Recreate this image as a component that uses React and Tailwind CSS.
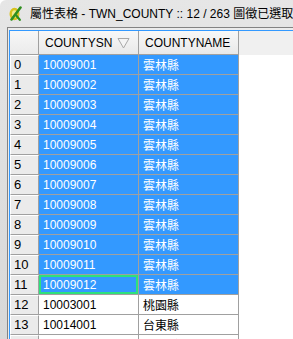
import React from 'react';

const filas = [
  ['10009001', '雲林縣'],
  ['10009002', '雲林縣'],
  ['10009003', '雲林縣'],
  ['10009004', '雲林縣'],
  ['10009005', '雲林縣'],
  ['10009006', '雲林縣'],
  ['10009007', '雲林縣'],
  ['10009008', '雲林縣'],
  ['10009009', '雲林縣'],
  ['10009010', '雲林縣'],
  ['10009011', '雲林縣'],
  ['10009012', '雲林縣'],
  ['10003001', '桃園縣'],
  ['10014001', '台東縣'],
  ['10013001', '屏東縣'],
];

function QgisIcon() {
  return (
    <svg width="13" height="15" viewBox="0 0 13 15" className="shrink-0">
      <ellipse cx="5.5" cy="8" rx="3.8" ry="5" fill="#f3ea8a" stroke="#d9c21e" strokeWidth="2.4" />
      <path d="M2.5 13.5 L11.5 1.5" stroke="#2f8f1f" strokeWidth="2.6" strokeLinecap="round" />
      <path d="M7.2 9.5 L10.8 13.8" stroke="#2f8f1f" strokeWidth="2.2" strokeLinecap="round" />
    </svg>
  );
}

function SortArrow() {
  return (
    <svg width="13" height="12" viewBox="0 0 13 12">
      <path d="M1 1.5 H12 L6.5 11 Z" fill="#f4f4f4" stroke="#a8a8a8" strokeWidth="1" strokeLinejoin="round" />
    </svg>
  );
}

export default function App() {
  return (
    <div className="w-[293px] h-[339px] overflow-hidden rounded-tl-[6px] bg-gradient-to-b from-[#e6e6e6] to-[#d8d8d8] font-['Liberation_Sans','Noto_Sans_CJK_TC',sans-serif] text-black">
      {/* barra de titulo */}
      <div className="h-[27px] flex items-center pl-[9px] gap-[8px] whitespace-nowrap text-[12px]">
        <QgisIcon />
        <span>
          <span className="font-['Noto_Sans_CJK_TC',sans-serif]">屬性表格</span>
          {' - TWN_COUNTY :: 12 / 263 '}
          <span className="font-['Noto_Sans_CJK_TC',sans-serif]">圖徵已選取</span>
        </span>
      </div>

      <div className="ml-[7px] h-[312px] border-t border-l border-[#838383] bg-[#ececec] pl-[1px] pt-[2px]">
        <div className="h-full border-t border-l border-[#3399ff] bg-white text-[12px]">
          {/* encabezado */}
          <div className="flex h-[24px] bg-[#f0f0f0]">
            <div className="w-[29px] border-r border-b border-[#a0a0a0] bg-gradient-to-b from-[#f7f7f7] to-[#ebebeb]" />
            <div className="w-[100px] flex items-center justify-between pl-[6px] pr-[8px] border-r border-b border-[#a0a0a0] bg-gradient-to-b from-[#f8f8f8] to-[#e9e9e9]">
              <span>COUNTYSN</span>
              <SortArrow />
            </div>
            <div className="w-[100px] flex items-center pl-[6px] border-r border-b border-[#a0a0a0] bg-gradient-to-b from-[#f8f8f8] to-[#e9e9e9]">
              <span>COUNTYNAME</span>
            </div>
          </div>

          {filas.map(([sn, nombre], i) => {
            const sel = i < 12;
            const actual = i === 11;
            return (
              <div key={i} className="flex h-[20px]">
                <div className="w-[29px] flex items-center pl-[3px] text-[13px] border-t border-l border-white border-r border-b border-r-[#a0a0a0] border-b-[#a0a0a0] bg-[#ebebeb]">
                  {i}
                </div>
                <div
                  className={
                    'w-[100px] flex items-center pl-[4px] border-r border-b border-[#a0a0a0] ' +
                    (sel ? 'bg-[#3399ff] text-white ' : 'bg-white ') +
                    (actual ? 'shadow-[inset_0_0_0_2px_#2ee07c]' : '')
                  }
                >
                  {sn}
                </div>
                <div
                  className={
                    'w-[100px] flex items-center pl-[4px] border-r border-b border-[#a0a0a0] font-[\'Noto_Sans_CJK_TC\',sans-serif] ' +
                    (sel ? 'bg-[#3399ff] text-white' : 'bg-white')
                  }
                >
                  {nombre}
                </div>
              </div>
            );
          })}
        </div>
      </div>
    </div>
  );
}
